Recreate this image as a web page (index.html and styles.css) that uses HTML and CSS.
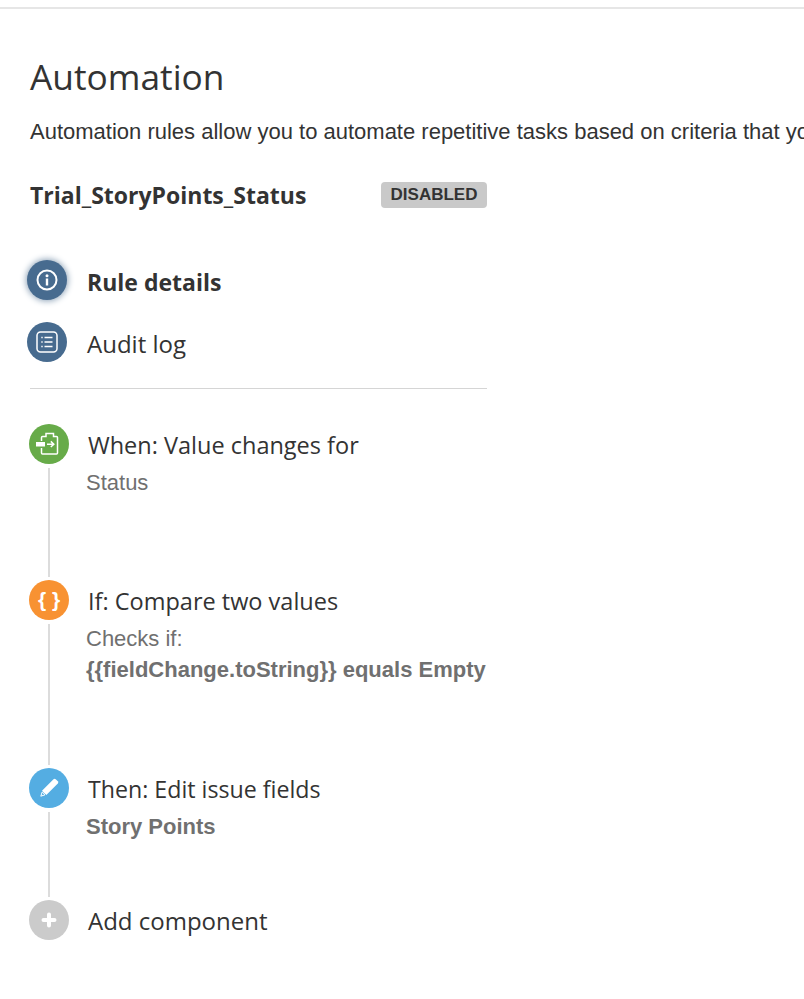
FILE: index.html
```html
<!DOCTYPE html>
<html lang="en">
<head>
	<meta charset="UTF-8">
	<title>Automation</title>
	<link rel="stylesheet" href="styles.css">
</head>
<body>
<div class="topbar"></div>
<div class="wrap">
	<h1>Automation</h1>
	<p class="intro">Automation rules allow you to automate repetitive tasks based on criteria that you set.</p>
	<div class="side">
		<div class="rule">
			<h2>Trial_StoryPoints_Status</h2>
			<span class="badge">DISABLED</span>
		</div>
		<ul class="nav">
			<li class="active">
				<b class="dot blue glow">
					<svg viewBox="0 0 24 24" width="24" height="24"><circle cx="12" cy="12" r="9.5" fill="none" stroke="#fff" stroke-width="2"/><rect x="10.8" y="10.5" width="2.4" height="7" fill="#fff"/><circle cx="12" cy="7.8" r="1.5" fill="#fff"/></svg>
				</b>
				<span>Rule details</span>
			</li>
			<li>
				<b class="dot blue">
					<svg viewBox="0 0 24 24" width="24" height="24"><rect x="2" y="2" width="20" height="20" rx="3.5" fill="none" stroke="#fff" stroke-width="1.5"/><path d="M9.5 7.5h8M9.5 12h8M9.5 16.5h8M6.3 7.5h1.4M6.3 12h1.4M6.3 16.5h1.4" stroke="#fff" stroke-width="1.5" fill="none"/></svg>
				</b>
				<span>Audit log</span>
			</li>
		</ul>
		<div class="steps">
			<div class="step when">
				<div class="rail">
					<b class="dot green">
						<svg class="wide" viewBox="0 0 24 24" width="24" height="24"><path d="M4.5 9V5.5a1 1 0 0 1 1-1H9V1.5h7.5v3h3a1 1 0 0 1 1 1V21a1 1 0 0 1-1 1h-14a1 1 0 0 1-1-1v-5" fill="none" stroke="#fff" stroke-width="1.5"/><rect x="-1" y="10" width="9" height="4.5" fill="#fff"/><path d="M10 12.2h6M13.8 9.4l3 2.8-3 2.8" fill="none" stroke="#fff" stroke-width="1.5"/></svg>
					</b>
					<i></i>
				</div>
				<div class="info">
					<h3>When: Value changes for</h3>
					<p>Status</p>
				</div>
			</div>
			<div class="step if">
				<div class="rail">
					<b class="dot orange brace">{ }</b>
					<i></i>
				</div>
				<div class="info">
					<h3>If: Compare two values</h3>
					<p>Checks if:</p>
					<p><strong>{{fieldChange.toString}} equals Empty</strong></p>
				</div>
			</div>
			<div class="step then">
				<div class="rail">
					<b class="dot sky">
						<svg viewBox="0 0 24 24" width="24" height="24"><path d="M16.5 3.2a1.6 1.6 0 0 1 2.2 0l2.1 2.1a1.6 1.6 0 0 1 0 2.2L9.3 19l-4.3-4.3z" fill="#fff"/><path d="M5.2 16l2.8 2.8-4.2 1.4z" fill="none" stroke="#fff"/></svg>
					</b>
					<i></i>
				</div>
				<div class="info">
					<h3>Then: Edit issue fields</h3>
					<p><strong>Story Points</strong></p>
				</div>
			</div>
			<div class="step add">
				<div class="rail">
					<b class="dot grey">
						<svg viewBox="0 0 24 24" width="24" height="24"><path d="M12 6.5v11M6.5 12h11" stroke="#fff" stroke-width="4" stroke-linecap="round" fill="none"/></svg>
					</b>
				</div>
				<div class="info">
					<h3>Add component</h3>
				</div>
			</div>
		</div>
	</div>
</div>
</body>
</html>
```

FILE: styles.css
```css
*{
	box-sizing: border-box;
	margin: 0;
	padding: 0;
}
html,body{
	height: 100%;
	overflow: hidden;
}
body{
	background: #fff;
	color: #333;
	font-family: "Liberation Sans", Arial, sans-serif;
	font-size: 22px;
}
.topbar{
	height: 9px;
	border-bottom: 2px solid #e6e6e6;
}
.wrap{
	padding: 44px 0 0 30px;
}
h1{
	font-family: "Open Sans", sans-serif;
	font-size: 35.3px;
	font-weight: 400;
	line-height: 47px;
	color: #333;
}
.intro{
	margin-top: 17px;
	font-size: 22px;
	line-height: 30px;
	white-space: nowrap;
	color: #333;
}
.side{
	width: 457px;
}
.rule{
	display: flex;
	justify-content: space-between;
	align-items: center;
	margin-top: 33px;
	height: 30px;
}
h2{
	font-family: "Open Sans", sans-serif;
	font-size: 23px;
	font-weight: 700;
	line-height: 30px;
	color: #333;
}
.badge{
	width: 106px;
	height: 26px;
	background: #c9c9c9;
	border-radius: 4px;
	color: #333;
	font-size: 17px;
	font-weight: 700;
	line-height: 26px;
	text-align: center;
}
.nav{
	list-style: none;
	margin-top: 50px;
	padding-bottom: 26px;
	border-bottom: 1px solid #d5d5d5;
}
.nav li{
	display: flex;
	align-items: center;
	gap: 20px;
	height: 40px;
	margin-bottom: 22px;
	margin-left: -3px;
	font-family: "Open Sans", sans-serif;
	font-size: 24px;
}
.nav li:last-child{
	margin-bottom: 0;
}
.nav li span{
	padding-top: 3px;
}
.nav .active{
	font-size: 23px;
	font-weight: 700;
}
.dot{
	display: flex;
	flex: none;
	align-items: center;
	justify-content: center;
	width: 40px;
	height: 40px;
	border-radius: 50%;
}
.wide{
	overflow: visible;
}
.blue{
	background: #476b8f;
}
.glow{
	box-shadow: 0 0 6px 1px #8ea3b8;
}
.green{
	background: #67ab49;
}
.orange{
	background: #f89232;
}
.sky{
	background: #54ade2;
}
.grey{
	background: #cbcbcb;
}
.brace{
	color: #fff;
	font-size: 21px;
	font-weight: 700;
	line-height: 36px;
	white-space: pre;
}
.steps{
	margin-top: 35px;
}
.step{
	display: flex;
	gap: 19px;
	margin-left: -1px;
}
.when{
	height: 156px;
}
.if{
	height: 188px;
}
.then{
	height: 132px;
}
.rail{
	display: flex;
	flex-direction: column;
	align-items: center;
	width: 40px;
}
.rail i{
	flex: 1;
	width: 2px;
	margin: 4px 0 3px;
	background: #dcdcdc;
}
h3{
	font-family: "Open Sans", sans-serif;
	font-size: 23.5px;
	font-weight: 400;
	line-height: 42px;
	color: #333;
}
.then h3{
	font-size: 23.2px;
}
.add h3{
	font-size: 24px;
}
.info p{
	margin-left: -2px;
	font-size: 22px;
	line-height: 31px;
	color: #707070;
}
.info h3 + p{
	margin-top: 1px;
}
```
